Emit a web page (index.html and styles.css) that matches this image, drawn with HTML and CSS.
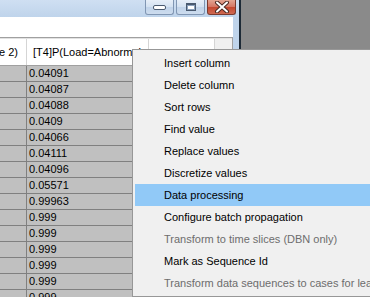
FILE: index.html
```html
<!DOCTYPE html>
<html lang="en">
<head>
  <meta charset="UTF-8">
  <title>Data table</title>
  <link rel="stylesheet" href="styles.css">
</head>
<body>
  <div class="screen">
    <div class="window">
      <div class="titlebar">
        <div class="caption-buttons">
          <div class="cap"><span class="glyph-min"></span></div>
          <div class="cap"><span class="glyph-max"></span></div>
          <div class="cap close">
            <svg width="16" height="12" viewBox="0 0 16 12">
              <path d="M3 1.5 L13 10.5 M13 1.5 L3 10.5" stroke="#4a2a24" stroke-width="4" stroke-linecap="round"/>
              <path d="M3 1.5 L13 10.5 M13 1.5 L3 10.5" stroke="#ffffff" stroke-width="2" stroke-linecap="round"/>
            </svg>
          </div>
        </div>
      </div>
      <div class="client">
        <div class="toolbar"></div>
        <div class="grid">
          <div class="grid-body">
            <div class="row head">
              <div class="cell c0"><div class="cut">[T3]P(Load=Abnormal state 2)</div></div>
              <div class="cell c1">[T4]P(Load=Abnormal state 1)</div>
              <div class="cell c2"></div>
            </div>
            <div id="rows"></div>
          </div>
          <div class="vscroll"></div>
        </div>
      </div>
    </div>

    <!-- Kontekstmenu -->
    <div class="menu">
      <div class="item">Insert column</div>
      <div class="item">Delete column</div>
      <div class="item">Sort rows</div>
      <div class="item">Find value</div>
      <div class="item">Replace values</div>
      <div class="item">Discretize values</div>
      <div class="item hover">Data processing</div>
      <div class="item">Configure batch propagation</div>
      <div class="item disabled">Transform to time slices (DBN only)</div>
      <div class="item">Mark as Sequence Id</div>
      <div class="item disabled">Transform data sequences to cases for learning</div>
    </div>
  </div>

  <script>
    // Værdier i kolonnen
    const values = ["0.04091", "0.04087", "0.04088", "0.0409", "0.04066", "0.04111",
      "0.04096", "0.05571", "0.99963", "0.999", "0.999", "0.999", "0.999", "0.999", "0.999"];
    const rows = document.getElementById("rows");
    values.forEach(function(v) {
      rows.innerHTML += `<div class="row"><div class="cell c0"></div><div class="cell c1">${v}</div><div class="cell c2"></div></div>`;
    });
  </script>
</body>
</html>
```

FILE: styles.css
```css
html, body {
  margin: 0;
  padding: 0;
}
body {
  font-family: "Liberation Sans", Arial, sans-serif;
  font-size: 11px;
  background-color: #8a8a8a;
  overflow: hidden;
}
.screen {
  position: relative;
  width: 370px;
  height: 297px;
  overflow: hidden;
}
.window {
  width: 241px;
  height: 297px;
  box-sizing: border-box;
  border-right: 2px solid #1d2a36;
  background-color: #bfd4eb;
  display: flex;
  flex-direction: column;
}
.titlebar {
  height: 17px;
  flex: 0 0 17px;
  background: linear-gradient(#cfdff2, #bfd4eb);
  display: flex;
  justify-content: flex-end;
  align-items: flex-start;
  padding-right: 3px;
}
.caption-buttons {
  display: flex;
  gap: 2px;
}
.cap {
  width: 29px;
  height: 15px;
  box-sizing: border-box;
  border: 1px solid #8096b3;
  border-top: none;
  border-radius: 0 0 3px 3px;
  background: linear-gradient(#e6eef8, #d3e1f1 50%, #c0d3ea 51%, #cddcee);
  display: flex;
  justify-content: center;
  align-items: center;
}
.cap.close {
  border-color: #7a3b30;
  background: linear-gradient(#e3a592, #d47563 50%, #c4472f 51%, #cf6a52);
}
.glyph-min {
  width: 11px;
  height: 3px;
  background: #ffffff;
  border: 1px solid #4a5a70;
  border-radius: 2px;
  margin-top: 1px;
}
.glyph-max {
  width: 8px;
  height: 5px;
  border: 1px solid #4a5a70;
  border-top-width: 2px;
  background: #ffffff;
  box-shadow: inset 0 0 0 1px #8aa0bb;
  margin-bottom: 1px;
}
.client {
  flex: 1;
  margin-right: 6px;
  background-color: #ffffff;
  display: flex;
  flex-direction: column;
}
.toolbar {
  height: 20px;
  flex: 0 0 20px;
}
.grid {
  flex: 1;
  display: flex;
  border-top: 1px solid #a0a0a0;
  border-right: 1px solid #a0a0a0;
  box-shadow: inset 0 1px 0 #e2e2e2;
  padding-top: 1px;
}
.grid-body {
  flex: 1;
}
.vscroll {
  width: 17px;
  background-color: #f0f0f0;
}
.row {
  display: flex;
  height: 16px;
  box-sizing: border-box;
  border-bottom: 1px solid #808080;
  background-color: #c0c0c0;
}
.row.head {
  height: 27px;
  background-color: #ffffff;
  border-bottom-color: #a0a0a0;
}
.cell {
  box-sizing: border-box;
  border-right: 1px solid #808080;
  line-height: 15px;
  padding-left: 2px;
  white-space: nowrap;
  overflow: hidden;
}
.head .cell {
  border-right-color: #d5d5d5;
  display: flex;
  align-items: center;
  padding-left: 6px;
}
.c0 {
  width: 27px;
}
.c1 {
  width: 122px;
}
.c2 {
  flex: 1;
}
.head .c0 {
  padding-left: 0;
  padding-right: 8px;
}
.cut {
  flex: 1;
  display: flex;
  justify-content: flex-end;
  overflow: hidden;
}

/* Kontekstmenu */
.menu {
  position: absolute;
  left: 132px;
  top: 49px;
  width: 260px;
  box-sizing: border-box;
  background-color: #f0f0f0;
  border: 1px solid #979797;
  padding: 2px;
}
.item {
  height: 22px;
  line-height: 22px;
  padding-left: 29px;
  color: #000000;
  white-space: nowrap;
}
.item.hover {
  background-color: #91c9f7;
}
.item.disabled {
  color: #6d6d6d;
}
```
